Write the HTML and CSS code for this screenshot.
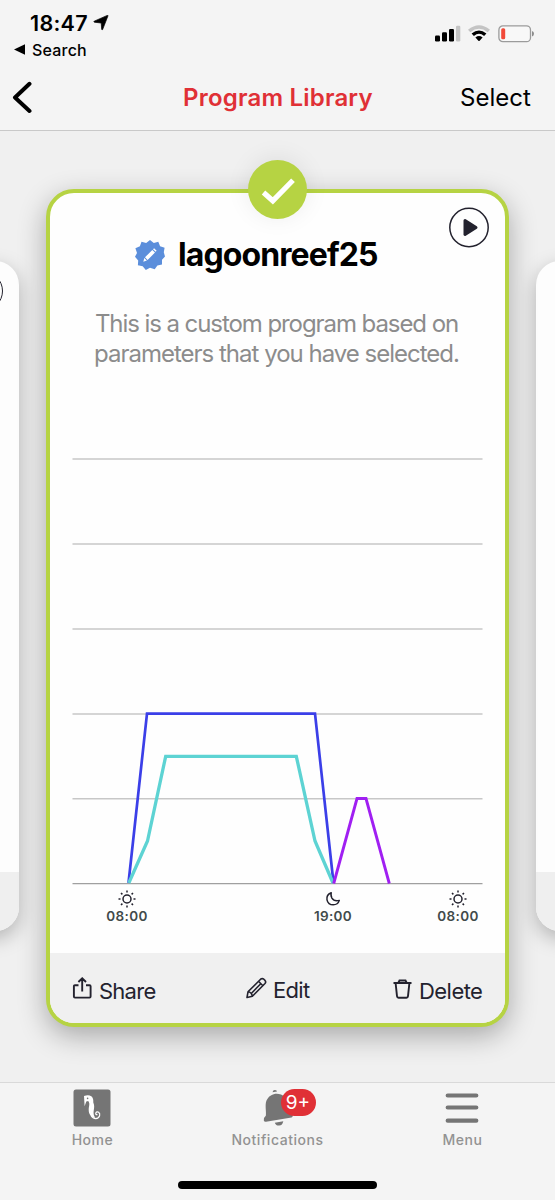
FILE: index.html
```html
<!DOCTYPE html>
<html lang="en">
<head>
<meta charset="utf-8">
<title>Program Library</title>
<link rel="stylesheet" href="styles.css">
</head>
<body>
<div class="screen">
  <header class="header">
    <div class="status">
      <div class="status-left">
        <div class="clock"><span class="time">18:47</span>
          <svg class="locate" width="16" height="16" viewBox="0 0 16 16"><path d="M15 .8 9.600 14.600Q9 15.200 8.700 14.400L8.200 8 1.300 7.200Q.4 6.700 1.200 6.200L14.300.4Q15.200.1 15 .8Z" stroke="#000" stroke-width=".7"/></svg>
        </div>
        <div class="back-app"><svg width="11" height="11" viewBox="0 0 11 11"><path d="M0 5.500 11 .2V10.800Z"/></svg><span class="back-label">Search</span></div>
      </div>
      <div class="status-right">
        <svg width="26" height="17" viewBox="0 0 26 17"><rect x="0" y="10.500" width="5" height="6" rx="1.200"/><rect x="7" y="7.300" width="5" height="9.200" rx="1.200"/><rect x="14" y="4" width="5" height="12.500" rx="1.200"/><rect x="21" y=".7" width="4.300" height="15.800" rx="1.200" fill="#c4c4c4"/></svg>
        <svg width="22" height="17" viewBox="0 0 22 17"><path d="M0 4.800Q11-4.200 22 4.800L19.700 7.200Q11 .3 2.300 7.200Z" fill="#c4c4c4"/><path d="M3.600 8.500Q11 2.400 18.400 8.500L16.100 10.900Q11 6.800 5.900 10.900Z"/><path d="M7.400 12.400Q11 9.600 14.600 12.400L11.600 15.700Q11 16.200 10.400 15.700Z"/></svg>
        <svg class="battery" width="37" height="18" viewBox="0 0 37 18"><rect x=".9" y=".9" width="31.600" height="15.800" rx="4" fill="#f8f8f8" stroke="#9b9b9b" stroke-width="1.300"/><rect x="3.200" y="3.300" width="4" height="11" rx="1.500" fill="#f24a39"/><path d="M34 6Q36 6.800 36 8.800T34 11.600Z" fill="#8c8c8c"/></svg>
      </div>
    </div>
    <nav class="nav">
      <svg width="20" height="34" viewBox="0 0 20 34"><path d="M17.500 3.800 3 17.500 17.500 31" fill="none" stroke="#000" stroke-width="4" stroke-linecap="round" stroke-linejoin="round"/></svg>
      <h1 class="title">Program Library</h1>
      <span class="select">Select</span>
    </nav>
  </header>

  <main class="carousel">
    <div class="side-card"><span class="side-play"></span><div class="side-footer"></div></div>
    <section class="card">
      <div class="check"><svg width="59" height="59" viewBox="0 0 59 59"><path d="M15.500 32.500 24.800 40.800 45 20.300" fill="none" stroke="#fff" stroke-width="5.200"/></svg></div>
      <div class="play"><svg width="41" height="41" viewBox="0 0 41 41"><circle cx="20" cy="20.500" r="19.200" fill="none" stroke="#23222e" stroke-width="1.500"/><path d="M16 13.500 27 20.500 16 27.500Z" fill="#23222e" stroke="#23222e" stroke-width="3" stroke-linejoin="round"/></svg></div>
      <div class="card-body">
        <div class="name-row">
          <svg width="30" height="30" viewBox="0 0 30 30"><path fill="#5b8edb" d="M15 0 18.800 3 23.300 1.800 25.100 6.200 29.600 7.800 28.800 12.300 30 16.600 27 19.800 27 24.600 22.400 25.400 19.700 29.200 15 27.800 10.800 30 7.700 26.300 2.900 25.200 3.200 20.500 0 16.800 2 13 .4 8.200 4.900 6.200 6.500 1.700 11.200 3Z"/><path d="m8.300 21.700 1-3.700 2.600 2.600ZM10 17.300 17.300 9.900l2.700 2.700-7.400 7.300ZM18 9.200l1.100-1 2.500 2.500-1 1.100Z" fill="#fff"/></svg>
          <h2 class="name">lagoonreef25</h2>
        </div>
        <p class="desc"><span class="line1">This is a custom program based on</span><br><span class="line2">parameters that you have selected.</span></p>
        <svg class="chart" width="411" height="428" viewBox="72 457 411 428">
          <g stroke="#c7c7c7" stroke-width="1.400"><path d="M72.500 459H482.500M72.500 544H482.500M72.500 629H482.500M72.500 714H482.500M72.500 798.700H482.500"/><path d="M72.500 883.600H482.500" stroke="#a0a0a0"/></g>
          <g fill="none" stroke-linejoin="miter"><path d="M128.500 883 147 713.700H315L333.500 883" stroke="#3b3fe8" stroke-width="2.700"/><path d="M128.800 883 147.500 841 165.700 756.300H296.300L315 841 333 883" stroke="#5dd3d3" stroke-width="3.300"/><path d="M333.700 883.500 357 798.500H366L389.300 883.500" stroke="#a01ff2" stroke-width="2.900"/></g>
        </svg>
        <div class="axis">
          <div class="tick"><svg width="18" height="18" viewBox="-9 -9 18 18"><g fill="none" stroke="#23222e" stroke-width="1.500"><circle r="4"/><path d="M0-8.500v2M0 6.500v2M-8.500 0h2M6.500 0h2M-6-6l1.400 1.400M4.600 4.600 6 6M-6 6l1.400-1.400M4.600-4.600 6-6"/></g></svg><span>08:00</span></div>
          <div class="tick tick-night"><svg width="18" height="18" viewBox="-9 -9 18 18"><path d="M-1.800-6.200C-4.800-5-6.500-2.300-6 .8-5.300 4-2.800 5.800.2 5.800 3.300 5.800 5.500 4 6.300 1.400 3.300 2.200.4 1.600-1.100-.9-2-2.600-2.200-4.500-1.800-6.200Z" fill="none" stroke="#23222e" stroke-width="1.500" stroke-linejoin="round"/></svg><span>19:00</span></div>
          <div class="tick"><svg width="18" height="18" viewBox="-9 -9 18 18"><g fill="none" stroke="#23222e" stroke-width="1.500"><circle r="4"/><path d="M0-8.500v2M0 6.500v2M-8.500 0h2M6.500 0h2M-6-6l1.400 1.400M4.600 4.600 6 6M-6 6l1.400-1.400M4.600-4.600 6-6"/></g></svg><span>08:00</span></div>
        </div>
      </div>
      <footer class="actions">
        <div class="action share"><svg width="21" height="24" viewBox="0 0 21 24"><path d="M6.500 8.200H3Q1.900 8.200 1.900 9.300V19.500Q1.900 20.600 3 20.600H17.500Q18.600 20.600 18.600 19.500V9.300Q18.600 8.200 17.500 8.200H14M10.200 14.500V2M6.400 5 10.200 1.300 14 5" fill="none" stroke="#23222e" stroke-width="1.900"/></svg><span>Share</span></div>
        <div class="action edit"><svg width="21" height="22" viewBox="0 0 21 22"><path d="M1 20.500 2 14.800 14.600 2.200Q16.200.9 17.800 2.200L19 3.400Q20.300 5 19 6.500L6.400 19.200ZM2 14.800Q5.500 15 6.400 19.200M12.500 4.300 16.900 8.700M5.500 16.200 14.500 7" fill="none" stroke="#23222e" stroke-width="1.600" stroke-linejoin="round"/></svg><span>Edit</span></div>
        <div class="action delete"><svg width="19" height="22" viewBox="0 0 19 22"><path d="M.5 4H18.500M5.500 3.500 6.500 1.500H12.500L13.500 3.500M2.600 4 4 17.200Q4.200 18.800 5.500 18.800H13.500Q14.800 18.800 15 17.200L16.400 4" fill="none" stroke="#23222e" stroke-width="1.900"/></svg><span>Delete</span></div>
      </footer>
    </section>
    <div class="side-card"><div class="side-footer"></div></div>
  </main>

  <footer class="tabs">
    <div class="tab">
      <svg class="tab-icon" width="38" height="38" viewBox="0 0 38 38"><rect x=".5" y=".5" width="37" height="37" rx="2.500" fill="#757575"/><path d="M11 7Q15.500 5.300 18.300 7.300C20.600 9.200 20.300 12 20.300 13.500 21.500 16 21.300 18.500 20.800 21 20.300 24 20.500 26.500 22.300 28.700 18 28.500 15.600 25 15.700 20.500 15.800 17 17.300 14.500 15.200 12L13.300 12.600 11.600 17.300Z" fill="#fff"/><path d="M18 26.500C20.500 30.800 25.500 30.200 26.600 26.800 27.500 23.600 24.300 21.700 22.900 23.800 22.200 25.300 23.500 26.300 24.400 25.300" fill="none" stroke="#fff" stroke-width="1.200"/><circle cx="14.600" cy="9.400" r=".8" fill="#757575"/></svg>
      <span class="label">Home</span>
    </div>
    <div class="tab">
      <div class="bell tab-icon"><svg width="34" height="38" viewBox="0 0 34 38"><path d="M.8 31.500Q.2 29 2.800 26.800C3.600 23 1.600 16 3.500 11.500 6.500 5 13 3.500 18 5.500 25 8.500 25 17 26.300 22.500L29.500 24.500Q30.500 27.500 28.500 28.500L3 32.700Q1.300 33 .8 31.500Z" fill="#757575"/><path d="M9.500 3.200Q10 .8 12 .9T14 2.600ZM11.800 33.700 20.300 32.200Q19.500 36.300 16.200 36.600 13 36.800 11.800 33.700Z" fill="#757575"/></svg><span class="badge">9+</span></div>
      <span class="label">Notifications</span>
    </div>
    <div class="tab">
      <svg class="tab-icon" width="34" height="38" viewBox="0 0 34 38"><path d="M2.700 6.500H31.300M2.700 18.500H31.300M2.700 31.700H31.300" stroke="#757575" stroke-width="4.200" stroke-linecap="round"/></svg>
      <span class="label">Menu</span>
    </div>
    <div class="home-indicator"></div>
  </footer>
</div>
</body>
</html>
```
FILE: styles.css
```css
* { box-sizing: border-box; }
body { margin: 0; font-family: Inter, "Liberation Sans", sans-serif; color: #000; }
svg { display: block; flex: none; }
.screen { width: 555px; height: 1200px; display: flex; flex-direction: column; overflow: hidden; background: #f4f4f4; }

.header { height: 131px; flex: none; border-bottom: 1px solid #c9c9c9; }
.status { height: 64px; padding: 10px 20px 0 14px; display: flex; justify-content: space-between; }
.clock { display: flex; padding-left: 16px; gap: 5px; height: 26px; line-height: 27px; }
.time { font-size: 21.500px; font-weight: 600; width: 58px; letter-spacing: .3px; }
.locate { margin-top: 5px; }
.back-app { display: flex; align-items: center; gap: 7px; height: 27px; }
.back-label { font-size: 16px; font-weight: 500; letter-spacing: .2px; }
.status-right { display: flex; gap: 7px; padding-top: 15px; }
.battery { margin-left: 1px; }
.nav { display: flex; align-items: center; justify-content: space-between; height: 66px; padding: 0 24px 0 12px; }
.title { margin: 0 0 0 73px; font-size: 24px; font-weight: 600; color: #e03036; width: 199px; letter-spacing: .2px; white-space: nowrap; }
.select { font-size: 24px; width: 71px; }

.carousel { flex: none; height: 951px; display: flex; justify-content: center; gap: 27px; overflow: hidden; background: #f0f0f0; }
.side-card { flex: none; width: 400px; height: 670px; margin-top: 130px; border-radius: 24px; background: #fdfdfd; box-shadow: 0 7px 20px rgba(0,0,0,.26); display: flex; flex-direction: column; justify-content: flex-end; overflow: hidden; }
.side-play { width: 40px; height: 40px; border: 1.500px solid #23222e; border-radius: 50%; align-self: flex-end; margin: 10px 16px auto 0; }
.side-footer { height: 59px; background: #efefef; }
.card { position: relative; flex: none; width: 463px; height: 838px; margin-top: 58px; border: 4px solid #b6d343; border-radius: 28px; background: #fefefe; box-shadow: 0 9px 28px rgba(0,0,0,.3); display: flex; flex-direction: column; }
.check { position: absolute; left: 198px; top: -33px; width: 59px; height: 59px; border-radius: 50%; background: #b6d343; box-shadow: 0 -2px 24px rgba(0,0,0,.08); }
.play { position: absolute; right: 15px; top: 14px; }
.card-body { flex: 1; padding-top: 42px; }
.name-row { display: flex; gap: 13px; padding-left: 85px; align-items: center; height: 40px; }
.name { margin: 0; font-size: 32px; font-weight: 700; line-height: 42px; letter-spacing: -.900px; white-space: nowrap; }
.desc { margin: 34px 2px 0 0; font-size: 24px; line-height: 30px; color: #8c8c8c; text-align: center; white-space: nowrap; }
.line1 { letter-spacing: -1.070px; }
.line2 { letter-spacing: -1px; }
.chart { margin: 88px 0 0 22px; }
.axis { display: flex; width: 411px; margin: 5px 0 0 22px; padding-left: 34px; }
.tick { width: 42px; display: flex; flex-direction: column; align-items: center; font-size: 13.500px; font-weight: 600; line-height: 17px; letter-spacing: .35px; color: #414a4a; }
.tick-night { margin: 0 83px 0 164px; }
.actions { height: 70px; flex: none; background: #f0f0f0; border-radius: 0 0 24px 24px; display: grid; grid-template-columns: 174px 147px 91px; padding: 22px 22px 0; color: #23222e; font-size: 22px; line-height: 32px; }
.action { display: flex; gap: 6px; }
.action svg { margin-top: 2px; }
.share { letter-spacing: -.750px; }
.edit { letter-spacing: -.700px; }
.edit span { margin-top: -1px; }
.delete { gap: 7px; letter-spacing: -.550px; }
.delete svg { margin-top: 4px; }

.tabs { flex: none; height: 118px; border-top: 1px solid #d9d9d9; display: grid; grid-template-columns: repeat(3, 185px); grid-template-rows: 98px 20px; }
.tab { display: flex; flex-direction: column; align-items: center; padding-top: 6px; }
.tab-icon { margin-right: 2px; }
.label { font-size: 14px; line-height: 18px; font-weight: 500; color: #929292; margin-top: 4px; letter-spacing: .55px; }
.bell { position: relative; width: 28px; display: flex; }
.badge { position: absolute; left: 18px; top: 0; width: 35px; height: 27px; border-radius: 14px; background: #e03036; color: #fff; font-size: 19px; line-height: 27px; text-align: center; }
.home-indicator { grid-column: 1 / 4; justify-self: center; width: 199px; height: 8px; border-radius: 4px; background: #000; }
```
